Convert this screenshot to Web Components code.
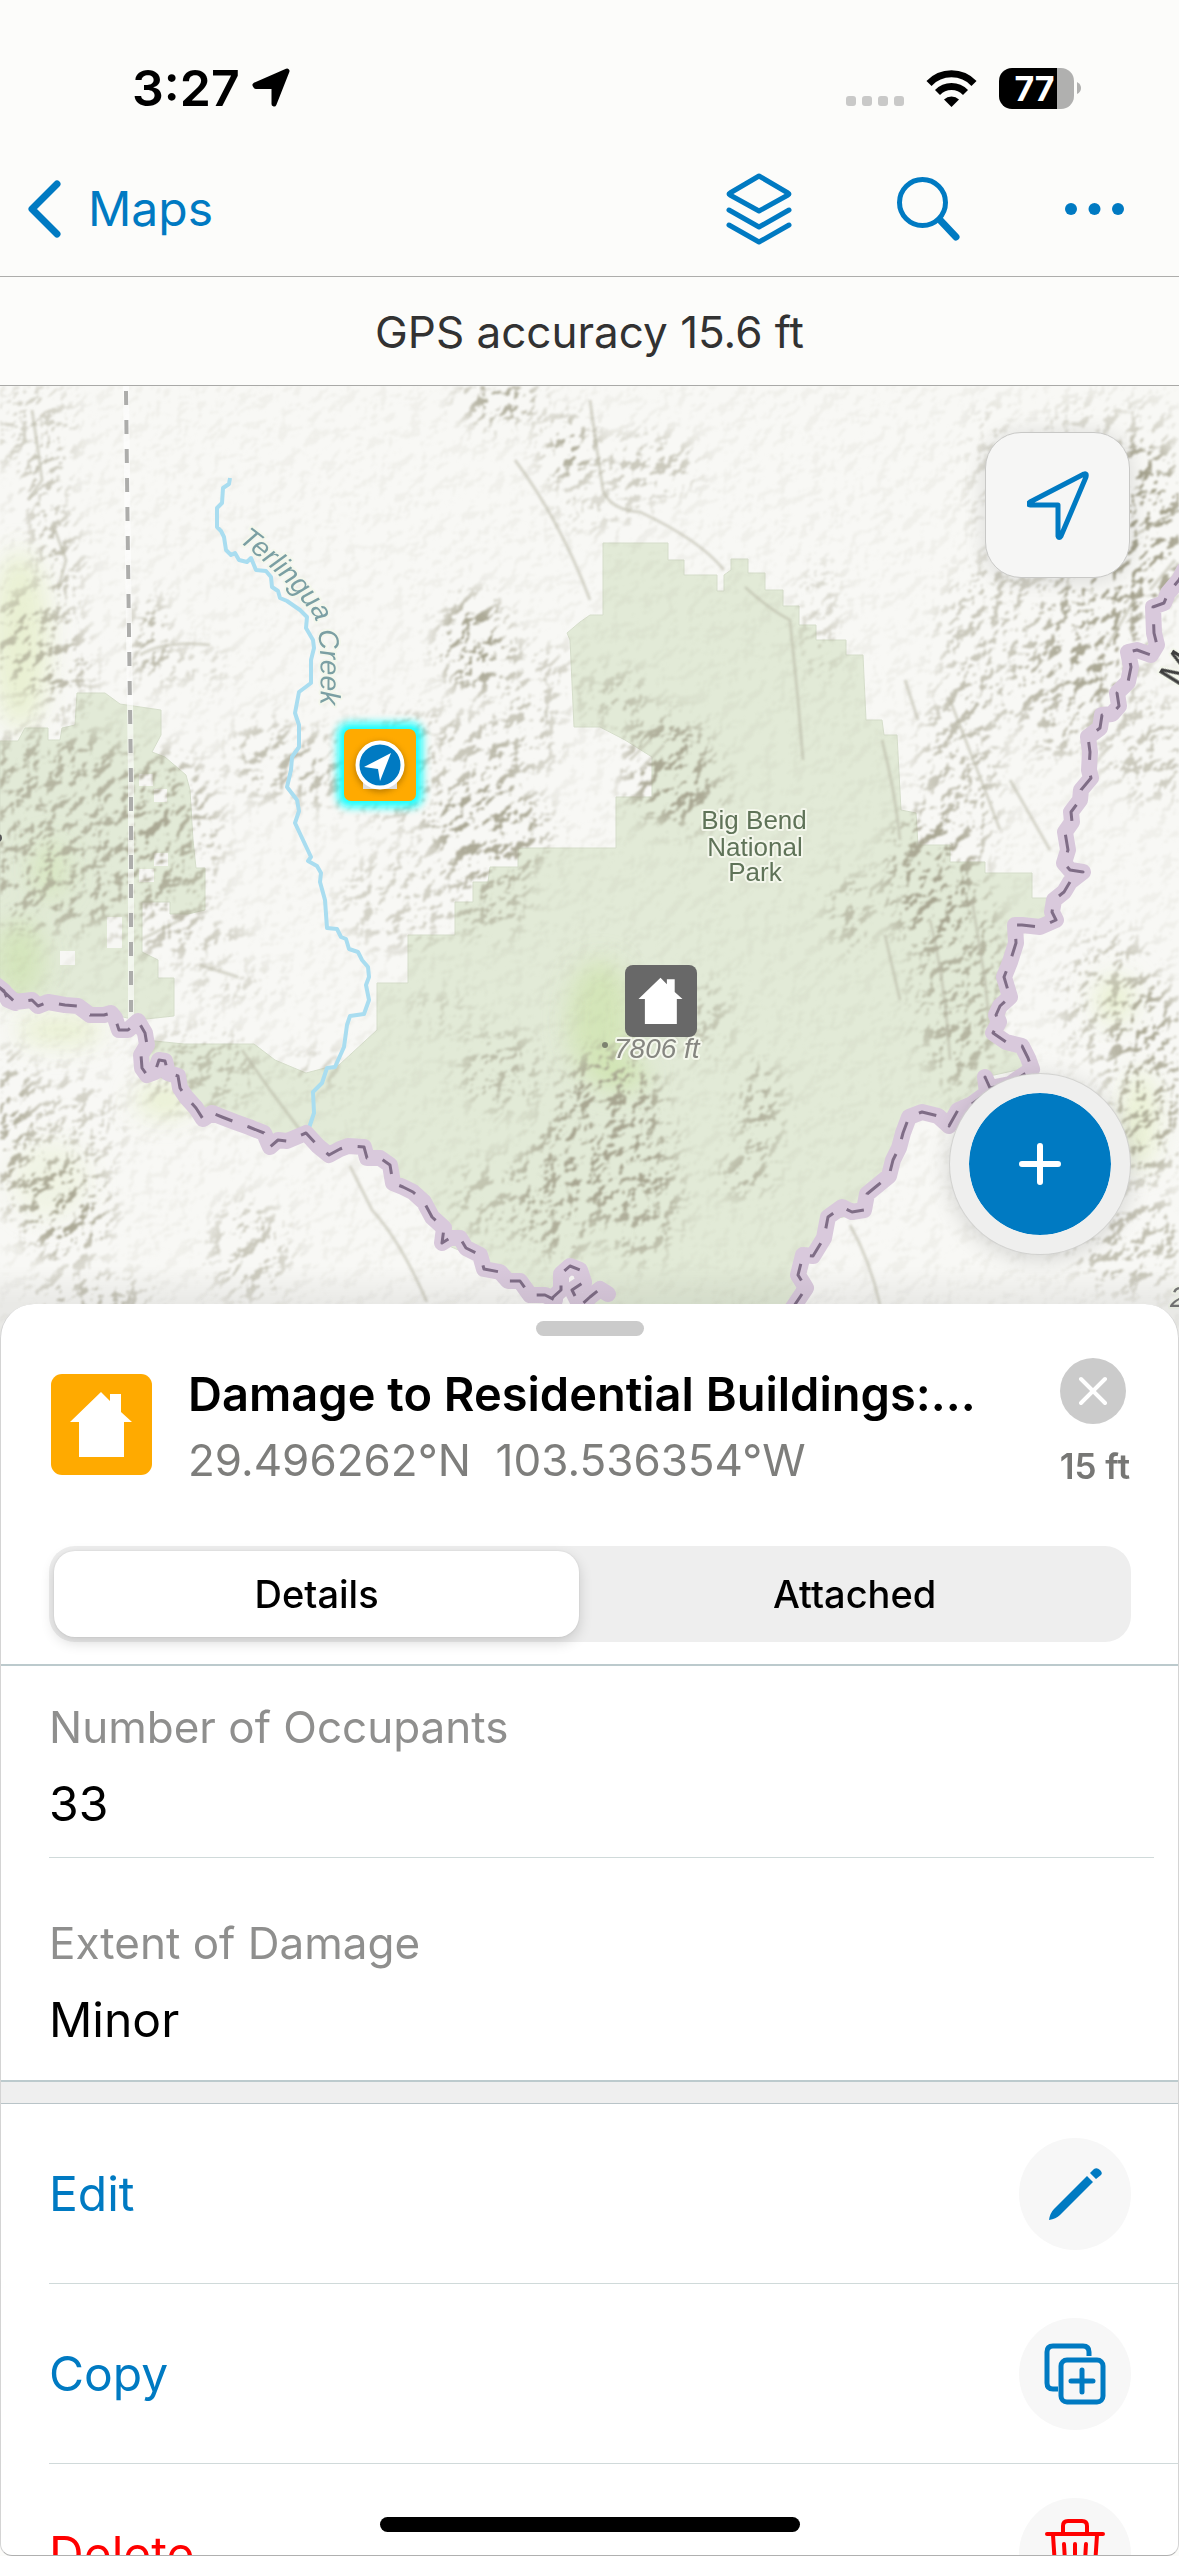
<!DOCTYPE html>
<html lang="en">
<head>
<meta charset="utf-8">
<meta name="viewport" content="width=device-width, initial-scale=1">
<title>Field map</title>
<style>
  html, body { margin: 0; height: 100%; background: #fff; }
  body { font-family: Inter, "Liberation Sans", sans-serif; color: #000; }
</style>
</head>
<body>
<field-app></field-app>
<script>
const base = `*, *::before { box-sizing: border-box; }
  svg { display: block; flex: none; }
  button { font: inherit; color: inherit; border: 0; background: none; padding: 0; margin: 0; cursor: pointer; }`;

function define(name, html, setup) {
  const template = document.createElement('template');
  template.innerHTML = `<style>${base}</style>` + html;
  customElements.define(name, class extends HTMLElement {
    constructor() {
      super();
      this.attachShadow({ mode: 'open' }).append(template.content.cloneNode(true));
    }
    connectedCallback() { if (setup) setup(this, this.shadowRoot); }
  });
}

const house = 'M50 18 L59 27 V20 H70 V38 L81 48 H73 V83 H28 V48 H19 Z';

define('status-bar', `
<style>
  :host { display: flex; justify-content: space-between; align-items: center; height: 142px; padding: 34px 98px 0 132px; }
  .side { display: flex; align-items: center; gap: 12px; }
  .right { gap: 22px; }
  .time { font-size: 50px; font-weight: 600; line-height: 60px; }
  .battery { display: flex; align-items: center; gap: 3px; }
  .cell { width: 75px; height: 41px; border-radius: 13px; line-height: 41px; font-size: 34px; font-weight: 700; color: #fff;
    text-align: center; padding-right: 4px; background: linear-gradient(90deg, #000 58px, #b0b0af 58px); }
</style>
<div class="side">
  <span class="time">3:27</span>
  <svg width="40" height="40" viewBox="0 0 40 40"><path d="M3 17 L35 3 L22 36 V18.500 H4 Z" stroke="#000" stroke-width="5" stroke-linejoin="round"/></svg>
</div>
<div class="side right">
  <svg width="58" height="36" viewBox="0 0 58 36" fill="#c9c9c8"><rect y="26" width="10" height="10" rx="3"/><rect x="16" y="26" width="10" height="10" rx="3"/><rect x="32" y="26" width="10" height="10" rx="3"/><rect x="48" y="26" width="10" height="10" rx="3"/></svg>
  <svg width="51" height="37" viewBox="0 0 51 37"><path d="M3 13.500 A31 31 0 0 1 48 13.500" fill="none" stroke="#000" stroke-width="7"/><path d="M11.500 22.500 A19.500 19.500 0 0 1 39.500 22.500" fill="none" stroke="#000" stroke-width="7"/><path d="M18 29.500 A11 11 0 0 1 33 29.500 L25.500 37 Z"/></svg>
  <div class="battery"><div class="cell">77</div><svg width="4" height="12" viewBox="0 0 4 12"><path d="M0 0 Q4 2 4 6 T0 12 Z" fill="#b0b0af"/></svg></div>
</div>`);

define('nav-bar', `
<style>
  :host { display: flex; justify-content: space-between; align-items: center; height: 135px; padding: 0 55px 0 27px; color: #007ac2; border-bottom: 1px solid #adadab; }
  .back { display: flex; align-items: center; gap: 27px; font-size: 48px; line-height: 60px; color: inherit; text-decoration: none; }
  .tools { display: flex; align-items: center; gap: 105px; }
  svg { fill: none; stroke: currentColor; stroke-linecap: round; stroke-linejoin: round; }
</style>
<a class="back" href="#maps"><svg width="34" height="58" viewBox="0 0 34 58" stroke-width="7"><path d="M30 4 L5 29 L30 54"/></svg>Maps</a>
<div class="tools">
  <button aria-label="Layers"><svg width="66" height="72" viewBox="0 0 66 72" stroke-width="5"><path d="M33 3 L62 20 Q64 21 62 22 L33 38 L4 22 Q2 21 4 20 Z"/><path d="M3 37 L33 54 L63 37 M3 52 L33 69 L63 52"/></svg></button>
  <button aria-label="Search"><svg width="63" height="64" viewBox="0 0 63 64" stroke-width="5"><circle cx="25.500" cy="25.500" r="23"/><path d="M43 43 L59 60" stroke-width="7"/></svg></button>
  <button aria-label="More"><svg width="59" height="12" viewBox="0 0 59 12"><g fill="currentColor" stroke="none"><circle cx="6" cy="6" r="6"/><circle cx="29.500" cy="6" r="6"/><circle cx="53" cy="6" r="6"/></g></svg></button>
</div>`);

define('accuracy-bar', `
<style>
  :host { display: block; height: 109px; line-height: 110px; text-align: center; font-size: 44px; color: #323232; border-bottom: 1px solid #a9a9a7; }
</style><slot></slot>`);

/* Blurred ellipses that say where the hill shading shows: cx cy rx ry strength */
const hills = [
  [35,430,40,50,.4],[45,500,20,50,.5],[60,560,20,40,.6],[35,640,50,50,.6],[65,680,30,30,.6],[150,640,14,45,.9],[190,665,50,14,.4],
  [60,830,120,100,.7],[170,840,50,90,.7],[270,760,40,40,.6],[320,770,30,40,.6],[430,770,90,60,.5],[490,830,60,50,.9],[400,900,60,50,.4],
  [500,400,40,25,.9],[570,450,25,35,.9],[475,645,35,50,1],[540,680,40,35,.4],[520,740,40,40,.5],[600,510,50,20,.3],[650,465,50,30,.5],
  [620,700,30,30,.5],[670,770,45,55,.9],[690,800,35,30,.7],[820,620,18,60,.4],
  [960,780,40,100,.6],[930,880,45,70,.9],[960,980,45,110,.7],[1000,640,60,80,.5],[1100,620,50,90,.9],[1140,530,50,90,1],[1150,750,50,50,.5],
  [990,480,20,80,.3],[1110,430,70,30,.3],[1060,700,40,60,.6],[1110,1000,50,70,.5],[1150,1080,40,100,.8],[1130,1240,60,50,.6],
  [180,940,70,20,.5],[230,985,50,8,.6],[200,1070,60,40,.5],[60,1130,60,60,.4],[65,1210,45,50,.9],[10,1130,20,80,.8],[250,1250,40,50,.5],[90,1300,60,25,.6],
  [490,900,40,35,.6],[500,1070,40,40,.6],[560,1190,40,70,.8],[610,1130,60,80,.9],[640,1190,40,70,.8],[610,1080,40,25,.9],[700,1020,30,40,.5],
  [760,1110,20,50,.8],[745,1175,24,18,.9],[850,910,22,40,.6],[500,1200,50,40,.5],[320,1070,30,20,.4],[440,1010,30,20,.3]];
const ridges = [
  'M590 400 L597 450 L603 490 Q610 510 640 512 Q700 540 724 570','M745 587 Q770 610 790 620 L798 700 L803 760',
  'M350 1166 L372 1210 Q400 1240 427 1302','M242 1050 L270 1090 L300 1130','M140 655 Q165 640 210 645','M140 940 L180 920 M200 965 L238 977','M515 460 Q560 520 590 600',
  'M905 680 L918 720 M950 700 L985 790 L1000 830 M1010 780 L1050 850','M930 920 Q945 980 950 1060 M972 900 L985 980 L990 1030 M885 935 L900 1000','M850 1225 Q870 1260 880 1305','M32 410 L38 450 L42 480 L28 500 M55 530 L66 560 L58 590',
  'M882 740 Q895 790 900 840','M630 760 L650 740 M640 770 L664 745','M1179 510 L1135 535 M1175 560 L1150 590 M1140 590 L1105 650'];

const greenLeft = 'M0 741 H18 L25 728 H48 V740 H60 L62 728 75 725 77 693 H105 L120 704 161 710 V735 L152 752 165 757 186 775 190 790 193 840 196 868 H205 V910 L188 914 H170 V902 H142 V952 L158 960 V978 H174 V1016 L137 1020 90 1010 48 1005 0 986 Z';
const greenPark = 'M145 1040 L184 1044 H254 L275 1060 306 1073 325 1068 339 1065 377 1030 V983 H408 V935 H455 V902 H473 V882 H488 L490 867 H518 V848 H616 V797 H652 V757 L625 740 600 727 H574 L570 640 567 633 580 622 590 615 H603 V543 H668 V560 H684 V575 H717 V591 H724 V575 L731 570 V559 H748 V573 H765 V590 H783 V606 H799 V625 H816 V640 H846 V655 H863 L866 720 H882 L884 735 H897 L901 810 916 813 918 845 H950 V862 H985 V873 H1032 V898 H1047 V918 L1015 925 V947 L1004 977 1010 997 996 1013 993 1033 1019 1045 1031 1067 985 1077 989 1093 958 1110 949 1125 912 1115 903 1133 893 1160 866 1193 863 1213 828 1220 824 1240 805 1250 800 1270 805 1290 794 1340 H600 L580 1277 574 1267 559 1297 517 1283 475 1257 442 1243 432 1217 394 1183 387 1160 364 1147 329 1155 306 1135 270 1147 249 1127 203 1117 182 1080 147 1075 Z';
const border = 'M-5 984 L4 991 8 1000 15 1003 M0 988 L15 1002 32 1000 38 1006 48 1002 65 1005 78 1006 90 1015 104 1015 111 1013 115 1018 119 1030 128 1030 138 1021 145 1033 147 1045 141 1055 142 1068 147 1075 155 1072 159 1060 165 1061 168 1073 178 1076 180 1088 186 1097 196 1108 203 1119 212 1113 222 1117 235 1122 249 1127 264 1133 270 1147 278 1140 287 1141 306 1133 318 1146 329 1155 340 1149 348 1146 364 1147 367 1158 380 1158 390 1165 393 1183 403 1187 413 1192 424 1202 432 1217 444 1228 442 1243 450 1238 460 1238 466 1248 480 1255 484 1269 500 1272 508 1281 520 1281 530 1295 545 1295 555 1300 M551 1299 L561 1290 561 1274 570 1266 580 1270 584 1282 572 1290 580 1306 590 1297 600 1289 608 1294';
const borderEast = 'M1184 570 L1179 580 1168 593 1164 603 1153 607 1154 633 1157 645 1151 655 1137 650 1128 652 1131 667 1128 682 1117 693 1119 706 1112 714 1102 715 1100 728 1088 737 1090 752 1089 770 1091 778 1081 790 1080 800 1071 812 1072 822 1065 832 1068 850 1064 863 1070 870 1083 872 1070 882 1064 892 1054 900 1052 912 1056 920 1040 927 1022 925 1015 925 1016 943 1010 962 1004 977 1010 997 1000 1006 996 1015 999 1022 993 1033 1006 1042 1022 1046 1028 1058 1032 1069 1010 1084 990 1088 985 1077 987 1093 972 1104 958 1110 949 1126 938 1116 922 1112 909 1117 903 1133 899 1148 893 1160 889 1176 878 1185 867 1194 864 1210 852 1212 842 1207 828 1217 824 1238 813 1256 803 1255 798 1275 806 1288 798 1300 790 1312';

define('map-view', `
<style>
  :host { display: block; position: relative; background: #f7f7f4; }
  .map { width: 100%; height: auto; }
  .controls { position: absolute; inset: 46px 49px 82px auto; display: flex; flex-direction: column; justify-content: space-between; align-items: flex-end; }
  .controls button { display: grid; place-items: center; }
  .locate { width: 145px; height: 146px; border-radius: 36px; background: #f6f6f5; border: 1px solid #c8c8c6; box-shadow: 0 2px 22px rgba(0,0,0,.13); }
  .add { width: 180px; height: 180px; border-radius: 50%; background: #007ac2; border: 19px solid #efefee; box-shadow: 0 0 1px 1px #cfcfcd, 0 4px 24px rgba(0,0,0,.16); background-clip: padding-box; }
  text { font-family: "Liberation Sans", sans-serif; }
  .halo { paint-order: stroke; stroke: #f4f7ec; stroke-width: 4px; stroke-linejoin: round; }
</style>
<svg class="map" viewBox="0 386 1179 950" role="img" aria-label="Terrain map of Big Bend National Park">
  <defs>
    <filter id="relief" x="0" y="0" width="100%" height="100%" color-interpolation-filters="sRGB">
      <feTurbulence type="fractalNoise" baseFrequency="0.06" numOctaves="3" seed="11"/>
      <feColorMatrix values="0 0 0 0 0  0 0 0 0 0  0 0 0 0 0  1 0 0 0 0"/>
      <feDiffuseLighting surfaceScale="18" diffuseConstant="1.1" lighting-color="#fff"><feDistantLight azimuth="225" elevation="50"/></feDiffuseLighting>
      <feColorMatrix values="0 0 0 0 .64  0 0 0 0 .63  0 0 0 0 .55  -2.2 0 0 0 .98"/>
      <feGaussianBlur stdDeviation="1"/>
    </filter>
    <filter id="blur" x="-50%" y="-50%" width="200%" height="200%"><feGaussianBlur stdDeviation="12"/></filter>
    <filter id="soft"><feGaussianBlur stdDeviation="1"/></filter>
    <filter id="glow" x="-50%" y="-50%" width="200%" height="200%"><feGaussianBlur stdDeviation="4"/></filter>
    <filter id="shade" x="-50%" y="-50%" width="200%" height="200%"><feGaussianBlur stdDeviation="3"/></filter>
    <mask id="hills" maskUnits="userSpaceOnUse" x="0" y="386" width="1179" height="950"><rect x="0" y="386" width="1179" height="950" fill="#161616"/><g class="hills" filter="url(#blur)" fill="#fff"></g></mask>
    <linearGradient id="edge" x1="0" y1="0" x2="0" y2="1"><stop offset="0" stop-color="#000" stop-opacity="0"/><stop offset="1" stop-color="#000" stop-opacity=".06"/></linearGradient>
    <path id="creek-label" d="M238 541 Q280 572 311 612 Q325 630 319 730"/>
  </defs>
  <rect x="0" y="386" width="1179" height="950" fill="#f8f8f5"/>
  <g filter="url(#blur)" fill="#e9f0d3"><ellipse cx="20" cy="640" rx="30" ry="90"/><ellipse cx="60" cy="1030" rx="45" ry="16"/><ellipse cx="165" cy="1100" rx="30" ry="18"/><ellipse cx="50" cy="1180" rx="40" ry="40" opacity=".5"/><ellipse cx="1140" cy="1120" rx="18" ry="50"/><ellipse cx="1115" cy="1000" rx="20" ry="25"/></g>
  <g fill="#e2ead7" stroke="#d6decb" stroke-width="1"><path d="${greenLeft}"/><path d="${greenPark}"/></g>
  <g filter="url(#blur)" fill="#cfe3b0"><ellipse cx="600" cy="1020" rx="32" ry="60" opacity=".8"/><ellipse cx="620" cy="1075" rx="28" ry="14"/><ellipse cx="20" cy="960" rx="25" ry="40" opacity=".7"/><ellipse cx="50" cy="870" rx="20" ry="30" opacity=".5"/></g>
  <g fill="#f7f7f4"><rect x="139" y="774" width="14" height="12"/><rect x="154" y="789" width="13" height="13"/><rect x="154" y="853" width="14" height="13"/><rect x="139" y="869" width="15" height="13"/><rect x="107" y="917" width="15" height="31"/><rect x="60" y="951" width="15" height="14"/></g>
  <g mask="url(#hills)"><rect x="0" y="386" width="1179" height="950" filter="url(#relief)"/></g>
  <g class="ridges" fill="none" stroke="#b5b3a2" stroke-width="3" stroke-opacity=".5" filter="url(#soft)"></g>
  <path d="M126 386 L128 560 L131 780 V1024" fill="none" stroke="#fff" stroke-opacity=".6" stroke-width="6"/>
  <path d="M126 391 L128 560 L131 780 V1012" fill="none" stroke="#adadab" stroke-width="4" stroke-dasharray="14 15"/>
  <path d="M230 478 L229 484 223 488 222 503 217 508 217 527 221 531 224 537 226 550 231 555 235 553 239 560 247 562 251 558 256 570 266 571 271 577 272 587 278 591 280 598 287 601 300 610 307 617 306 628 313 640 314 648 311 660 311 683 299 692 295 713 299 725 299 747 292 757 291 770 287 787 297 800 299 811 295 823 303 840 311 857 308 861 317 866 321 873 320 882 325 900 327 928 337 929 341 937 346 939 349 949 358 952 362 960 368 967 369 977 366 985 369 1000 364 1014 350 1016 347 1025 344 1047 335 1067 327 1068 322 1083 313 1092 314 1113 309 1128" fill="none" stroke="#a9ddf0" stroke-width="4" stroke-linejoin="round"/>
  <g fill="none" stroke-linejoin="round" stroke-linecap="round">
    <g stroke="#d9c9dc" stroke-width="16"><path d="${border}"/><path d="${borderEast}"/></g>
    <g stroke="#7f6d86" stroke-width="3" stroke-dasharray="18 16" stroke-linecap="butt"><path d="${border}"/><path d="${borderEast}"/></g>
  </g>
  <text font-size="28" font-style="italic" fill="#7b9fa3" class="halo"><textPath href="#creek-label">Terlingua Creek</textPath></text>
  <g class="halo" font-size="26" fill="#5f7358" text-anchor="middle"><text x="754" y="829">Big Bend</text><text x="755" y="856">National</text><text x="755" y="881">Park</text></g>
  <circle cx="605" cy="1045" r="3" fill="#7d8270"/>
  <text x="614" y="1058" font-size="28" font-style="italic" fill="#868681" class="halo">7806 ft</text>
  <text font-size="40" fill="#3e3e3e" class="halo" transform="translate(1181 690) rotate(-58)">M</text>
  <text x="1170" y="1307" font-size="30" font-style="italic" fill="#777" class="halo">2</text>
  <circle cx="-2" cy="838" r="4" fill="#555"/>
  <g transform="translate(625 965)"><rect width="72" height="72" rx="8" fill="#686868"/><path d="${house}" fill="#fff" transform="scale(.71)"/></g>
  <rect x="338" y="723" width="84" height="84" rx="10" fill="#1ff" filter="url(#glow)"/>
  <rect x="344" y="729" width="72" height="72" rx="7" fill="#fa0"/>
  <circle cx="380" cy="767" r="25" fill="#8a5a00" opacity=".6" filter="url(#shade)"/>
  <path d="M363 789 V778 H397 V789 Z" fill="#ddd"/>
  <circle cx="380" cy="765" r="22.500" fill="#007ac2" stroke="#fff" stroke-width="4"/>
  <path d="M391 753 L380 781 L378 769 L364 767 Z" fill="#fff"/>
  <rect x="0" y="1266" width="1179" height="38" fill="url(#edge)"/><rect x="0" y="1304" width="1179" height="32" fill="#000" fill-opacity=".06"/>
</svg>
<div class="controls">
  <button class="locate" aria-label="Show my location"><svg width="62" height="70" viewBox="1 -4 62 70" fill="none" stroke="#007ac2" stroke-width="5" stroke-linejoin="round"><path d="M58 0 L4 28 Q1 30 4 31 H32 V62 Q33 65 35 62 L60 3 Q61 -1 58 0 Z"/></svg></button>
  <button class="add" aria-label="Add feature"><svg width="42" height="42" viewBox="0 0 42 42" stroke="#fff" stroke-width="6" stroke-linecap="round"><path d="M21 3 V39 M3 21 H39"/></svg></button>
</div>`, (host, root) => {
  root.querySelector('.hills').innerHTML = hills.map(([x, y, rx, ry, o]) => `<ellipse cx="${x}" cy="${y}" rx="${rx}" ry="${ry}" opacity="${o}"/>`).join('');
  root.querySelector('.ridges').innerHTML = ridges.map(d => `<path d="${d}"/>`).join('');
});

define('feature-header', `
<style>
  :host { display: flex; align-items: center; gap: 36px; margin: 19px 48px 0 50px; }
  .text { flex: 1; min-width: 0; padding-top: 6px; line-height: 66px; white-space: nowrap; }
  h1 { margin: 0; font-size: 47px; font-weight: 600; line-height: inherit; }
  p { margin: 0; font-size: 44px; color: #7e7e7c; white-space: pre; }
  .end { display: flex; flex-direction: column; align-items: flex-end; gap: 18px; font-size: 35px; font-weight: 600; line-height: 48px; color: #777775; }
  .end button { margin-right: 4px; }
</style>
<svg width="101" height="101" viewBox="0 0 101 101"><rect width="101" height="101" rx="11" fill="#fa0"/><path d="${house}" fill="#fff"/></svg>
<div class="text"><h1><slot name="title"></slot></h1><p><slot></slot></p></div>
<div class="end">
  <button aria-label="Close"><svg width="66" height="66" viewBox="0 0 66 66"><circle cx="33" cy="33" r="33" fill="#cbcbcb"/><path d="M21 21 L45 45 M45 21 L21 45" stroke="#fff" stroke-width="4" stroke-linecap="round"/></svg></button>
  <slot name="distance"></slot>
</div>`);

define('segment-tabs', `
<style>
  :host { display: flex; margin: 53px 47px 22px 48px; padding: 5px; height: 96px; border-radius: 26px; background: #eee; }
  button { flex: 1; padding-left: 4px; font-size: 38px; font-weight: 500; border-radius: 21px; }
  button[aria-selected=true] { flex: none; width: 49%; padding-left: 0; background: #fff; box-shadow: 0 5px 14px rgba(0,0,0,.16), 0 0 2px rgba(0,0,0,.1); }
</style>
<button role="tab" aria-selected="true">Details</button><button role="tab" aria-selected="false">Attached</button>`,
host => host.setAttribute('role', 'tablist'));

define('detail-field', `
<style>
  :host { display: block; margin: 0 24px 0 48px; padding: 31px 0 18px; border-bottom: 1px solid #d0dada; }
  :host(:last-child) { border-color: transparent; }
  .label { font-size: 44px; line-height: 60px; color: #8f8f8e; }
  .value { margin-top: 12px; font-size: 48px; line-height: 70px; }
</style>
<div class="label"><slot name="label"></slot></div><div class="value"><slot></slot></div>`);

define('action-row', `
<style>
  :host { display: block; margin-left: 48px; color: #007ac2; border-bottom: 1px solid #d0dada; }
  :host([danger]) { color: #f00; }
  button { display: flex; width: 100%; height: 179px; padding: 0 47px 0 0; align-items: center; justify-content: space-between; font-size: 48px; line-height: 60px; }
  .disc { width: 112px; height: 112px; border-radius: 50%; background: #f7f7f7; display: grid; place-items: center; }
  ::slotted(svg) { display: block; }
</style>
<button><span><slot></slot></span><span class="disc"><slot name="icon"></slot></span></button>`);

define('feature-sheet', `
<style>
  :host { display: block; position: relative; flex: 1; min-height: 0; margin-top: -32px; overflow: hidden; background: #fff; border: solid #d4d4d4; border-width: 0 1px 1px; border-bottom-color: #b0b0b0; border-radius: 34px 34px 12px 12px; }
  .grabber { width: 108px; height: 15px; margin: 17px auto 0; border-radius: 8px; background: #cbcbcb; }
  .fields { display: flex; flex-direction: column; gap: 24px; padding-bottom: 6px; border: solid #bccacd; border-width: 2px 0; }
  .gap { height: 22px; background: #efefef; border-bottom: 1px solid #b9c4c8; }
</style>
<div class="grabber"></div>
<feature-header><span slot="title">Damage to Residential Buildings:...</span>29.496262°N  103.536354°W<span slot="distance">15 ft</span></feature-header>
<segment-tabs></segment-tabs>
<div class="fields">
  <detail-field><span slot="label">Number of Occupants</span>33</detail-field>
  <detail-field><span slot="label">Extent of Damage</span>Minor</detail-field>
</div>
<div class="gap"></div>
<action-row>Edit<svg slot="icon" width="62" height="62" viewBox="0 0 62 62" fill="currentColor"><path d="M5 57 Q6 50 10 46 L43 13 L49 19 L16 52 Q12 56 5 57 Z M46 10 L50 6 Q53 4 56 7 T57 12 L52 16 Z"/></svg></action-row>
<action-row>Copy<svg slot="icon" width="62" height="62" viewBox="0 0 62 62" fill="none" stroke="currentColor" stroke-width="5" stroke-linecap="round"><path d="M14 46 H9 Q3 46 3 40 V9 Q3 3 9 3 H39 Q45 3 45 9 V13" stroke-linecap="butt"/><rect x="17" y="17" width="42" height="42" rx="6"/><path d="M38 27 V49 M27 38 H49"/></svg></action-row>
<action-row danger>Delete<svg slot="icon" width="62" height="72" viewBox="0 0 62 72" fill="none" stroke="currentColor" stroke-width="4" stroke-linecap="round"><path d="M3 16 H59 M19 15 V8 Q19 3 24 3 H38 Q43 3 43 8 V15 M9 17 L12 63 Q12 69 18 69 H44 Q50 69 50 63 L53 17 M20 26 L22 60 M31 26 V60 M42 26 L40 60"/></svg></action-row>`);

define('field-app', `
<style>
  :host { display: flex; flex-direction: column; position: relative; height: 100vh; overflow: hidden; background: #fcfcfa; }
  status-bar, nav-bar, accuracy-bar, map-view { flex: none; }
  .home { position: absolute; left: 50%; bottom: 24px; width: 420px; height: 15px; margin-left: -210px; border-radius: 8px; background: #000; }
</style>
<status-bar></status-bar>
<nav-bar></nav-bar>
<accuracy-bar>GPS accuracy 15.6 ft</accuracy-bar>
<map-view></map-view>
<feature-sheet></feature-sheet>
<div class="home"></div>`);
</script>
</body>
</html>
